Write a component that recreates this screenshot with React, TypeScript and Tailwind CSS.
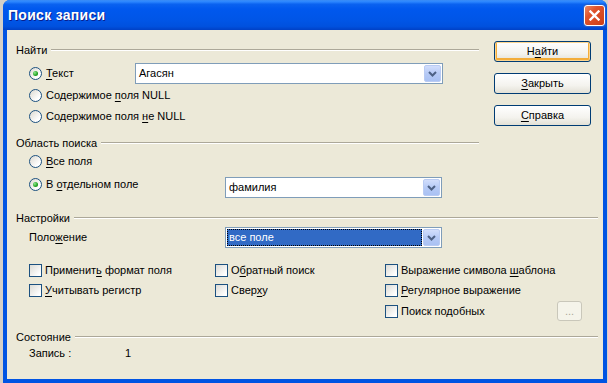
import React from "react";

const FONT = "font-['Liberation_Sans',Arial,sans-serif]";

function Acc({ text, at }: { text: string; at: number }) {
  return (
    <>
      {text.slice(0, at)}
      <span className="underline underline-offset-[2px]">{text[at]}</span>
      {text.slice(at + 1)}
    </>
  );
}

function GroupHeader({ label }: { label: string }) {
  return (
    <div className="flex h-[14px] items-center">
      <span className="leading-[14px]">{label}</span>
      <div className="ml-[4px] flex flex-1 flex-col">
        <div className="h-px bg-[#aca899]" />
        <div className="h-px bg-white" />
      </div>
    </div>
  );
}

function Radio({ checked }: { checked?: boolean }) {
  return (
    <span className="flex h-[13px] w-[13px] shrink-0 items-center justify-center rounded-full border border-[#1c5180] bg-[linear-gradient(135deg,#dcd9d0,#ffffff_75%)]">
      {checked && (
        <span className="h-[5px] w-[5px] rounded-full bg-[radial-gradient(circle_at_35%_35%,#8ee88e,#21a121_60%,#1a7a1a)]" />
      )}
    </span>
  );
}

function Check() {
  return (
    <span className="h-[13px] w-[13px] shrink-0 border border-[#1c5180] bg-[linear-gradient(135deg,#dcdbd5,#ffffff_85%)]" />
  );
}

function Chevron() {
  return (
    <svg width="9" height="6" viewBox="0 0 9 6">
      <path d="M1 1 L4.5 4.5 L8 1" fill="none" stroke="#4d6185" strokeWidth="2" />
    </svg>
  );
}

function Combo({
  value,
  width,
  selected,
}: {
  value: string;
  width: string;
  selected?: boolean;
}) {
  return (
    <div className={`flex h-[21px] ${width} border border-[#7f9db9] bg-white p-px`}>
      <div
        className={`flex flex-1 items-center pl-[2px] ${
          selected
            ? "bg-[#316ac5] text-white outline-1 outline-dotted outline-offset-[-1px] outline-black"
            : ""
        }`}
      >
        {value}
      </div>
      <div className="ml-px flex w-[17px] items-center justify-center rounded-[2px] border border-[#b9cbf3] bg-[linear-gradient(to_bottom,#d2defc,#b6caf6_50%,#a9c1f3)]">
        <Chevron />
      </div>
    </div>
  );
}

function Button({ children, isDefault }: { children: React.ReactNode; isDefault?: boolean }) {
  return (
    <div
      className={`flex h-[21px] w-[97px] items-center justify-center rounded-[3px] border border-[#003c74] bg-[linear-gradient(to_bottom,#ffffff,#f4f3ee_60%,#e3e1d6)] ${
        isDefault ? "shadow-[inset_0_0_0_1px_#fcd58f,inset_0_-1px_0_2px_#f3ad3a]" : ""
      }`}
    >
      {children}
    </div>
  );
}

function CheckItem({ children, width }: { children: React.ReactNode; width: string }) {
  return (
    <div className={`flex ${width} items-center gap-[3px]`}>
      <Check />
      <span className="whitespace-nowrap">{children}</span>
    </div>
  );
}

export default function App() {
  return (
    <div className={`h-[383px] w-[608px] overflow-hidden bg-[#d4d0c8] pl-[3px] text-[11px] text-black ${FONT}`}>
      <div className="flex h-[383px] w-[604px] flex-col rounded-t-[7px] bg-[#0054e3]">
        {/* title bar */}
        <div className="flex h-[30px] shrink-0 items-center rounded-t-[7px] bg-[linear-gradient(to_bottom,#3a8cf6_0%,#2b86ff_6%,#0a62f0_14%,#0058ee_30%,#0055e6_70%,#0051de_88%,#0041c6_100%)] pl-[5px] pr-[2px]">
          <span className="flex-1 text-[14px] font-bold tracking-[0.3px] text-white [text-shadow:1px_1px_0_#0a1e8c]">
            Поиск записи
          </span>
          <div className="flex h-[21px] w-[21px] items-center justify-center rounded-[3px] border border-white bg-[linear-gradient(135deg,#ec8a66,#e0532c_35%,#cc3f17)] shadow-[0_0_0_1px_#2c5fc9]">
            <svg width="11" height="11" viewBox="0 0 11 11">
              <path d="M1.5 1.5 L9.5 9.5 M9.5 1.5 L1.5 9.5" stroke="white" strokeWidth="2.4" strokeLinecap="square" />
            </svg>
          </div>
        </div>

        {/* client area */}
        <div className="mx-[4px] mb-[4px] flex flex-1 flex-col bg-[#ece9d8]">
          <div className="flex">
            {/* left column */}
            <div className="flex w-[472px] flex-col pl-[9px]">
              <div className="mt-[13px]">
                <GroupHeader label="Найти" />
              </div>
              <div className="flex flex-col pl-[13px]">
                <div className="mt-[6px] flex h-[21px] items-center">
                  <div className="flex w-[106px] items-center gap-[4px]">
                    <Radio checked />
                    <span>
                      <Acc text="Текст" at={0} />
                    </span>
                  </div>
                  <Combo value="Агасян" width="w-[308px]" />
                </div>
                <div className="mt-[1px] flex h-[21px] items-center gap-[4px]">
                  <Radio />
                  <span>
                    <Acc text="Содержимое поля NULL" at={11} />
                  </span>
                </div>
                <div className="flex h-[21px] items-center gap-[4px]">
                  <Radio />
                  <span>
                    <Acc text="Содержимое поля не NULL" at={16} />
                  </span>
                </div>
              </div>

              <div className="mt-[9px]">
                <GroupHeader label="Область поиска" />
              </div>
              <div className="flex flex-col pl-[13px]">
                <div className="mt-[1px] flex h-[20px] items-center gap-[4px]">
                  <Radio />
                  <span>
                    <Acc text="Все поля" at={0} />
                  </span>
                </div>
                <div className="mt-[2px] flex items-start">
                  <div className="flex h-[22px] w-[196px] items-center gap-[4px]">
                    <Radio checked />
                    <span>
                      <Acc text="В отдельном поле" at={2} />
                    </span>
                  </div>
                  <div className="mt-[4px]">
                    <Combo value="фамилия" width="w-[217px]" />
                  </div>
                </div>
              </div>
            </div>

            {/* buttons */}
            <div className="flex flex-col gap-[11px] pl-[15px] pt-[11px]">
              <Button isDefault>
                <Acc text="Найти" at={1} />
              </Button>
              <Button>
                <Acc text="Закрыть" at={0} />
              </Button>
              <Button>
                <Acc text="Справка" at={0} />
              </Button>
            </div>
          </div>

          {/* settings */}
          <div className="mt-[13px] flex flex-col pl-[9px] pr-[5px]">
            <GroupHeader label="Настройки" />
            <div className="flex flex-col pl-[13px]">
              <div className="mt-[2px] flex h-[21px] items-center">
                <span className="w-[196px]">
                  <Acc text="Положение" at={4} />
                </span>
                <Combo value="все поле" width="w-[217px]" selected />
              </div>
              <div className="mt-[12px] flex h-[20px] items-center">
                <CheckItem width="w-[186px]">
                  <Acc text="Применить формат поля" at={8} />
                </CheckItem>
                <CheckItem width="w-[170px]">
                  <Acc text="Обратный поиск" at={1} />
                </CheckItem>
                <CheckItem width="w-[172px]">
                  <Acc text="Выражение символа шаблона" at={18} />
                </CheckItem>
              </div>
              <div className="flex h-[20px] items-center">
                <CheckItem width="w-[186px]">
                  <Acc text="Учитывать регистр" at={0} />
                </CheckItem>
                <CheckItem width="w-[170px]">
                  <Acc text="Сверху" at={4} />
                </CheckItem>
                <CheckItem width="w-[172px]">
                  <Acc text="Регулярное выражение" at={0} />
                </CheckItem>
              </div>
              <div className="flex h-[22px] items-center">
                <div className="w-[356px]" />
                <CheckItem width="w-[172px]">Поиск подобных</CheckItem>
                <div className="flex h-[20px] w-[25px] items-center justify-center rounded-[3px] border border-[#c9c7ba] bg-[#f5f4ea] text-[#aca899]">
                  ...
                </div>
              </div>
            </div>
          </div>

          {/* status */}
          <div className="mt-[8px] flex flex-col pl-[9px] pr-[5px]">
            <GroupHeader label="Состояние" />
            <div className="mt-[2px] flex h-[14px] items-center pl-[13px]">
              <span className="w-[96px]">Запись :</span>
              <span>1</span>
            </div>
          </div>
        </div>
      </div>
    </div>
  );
}
